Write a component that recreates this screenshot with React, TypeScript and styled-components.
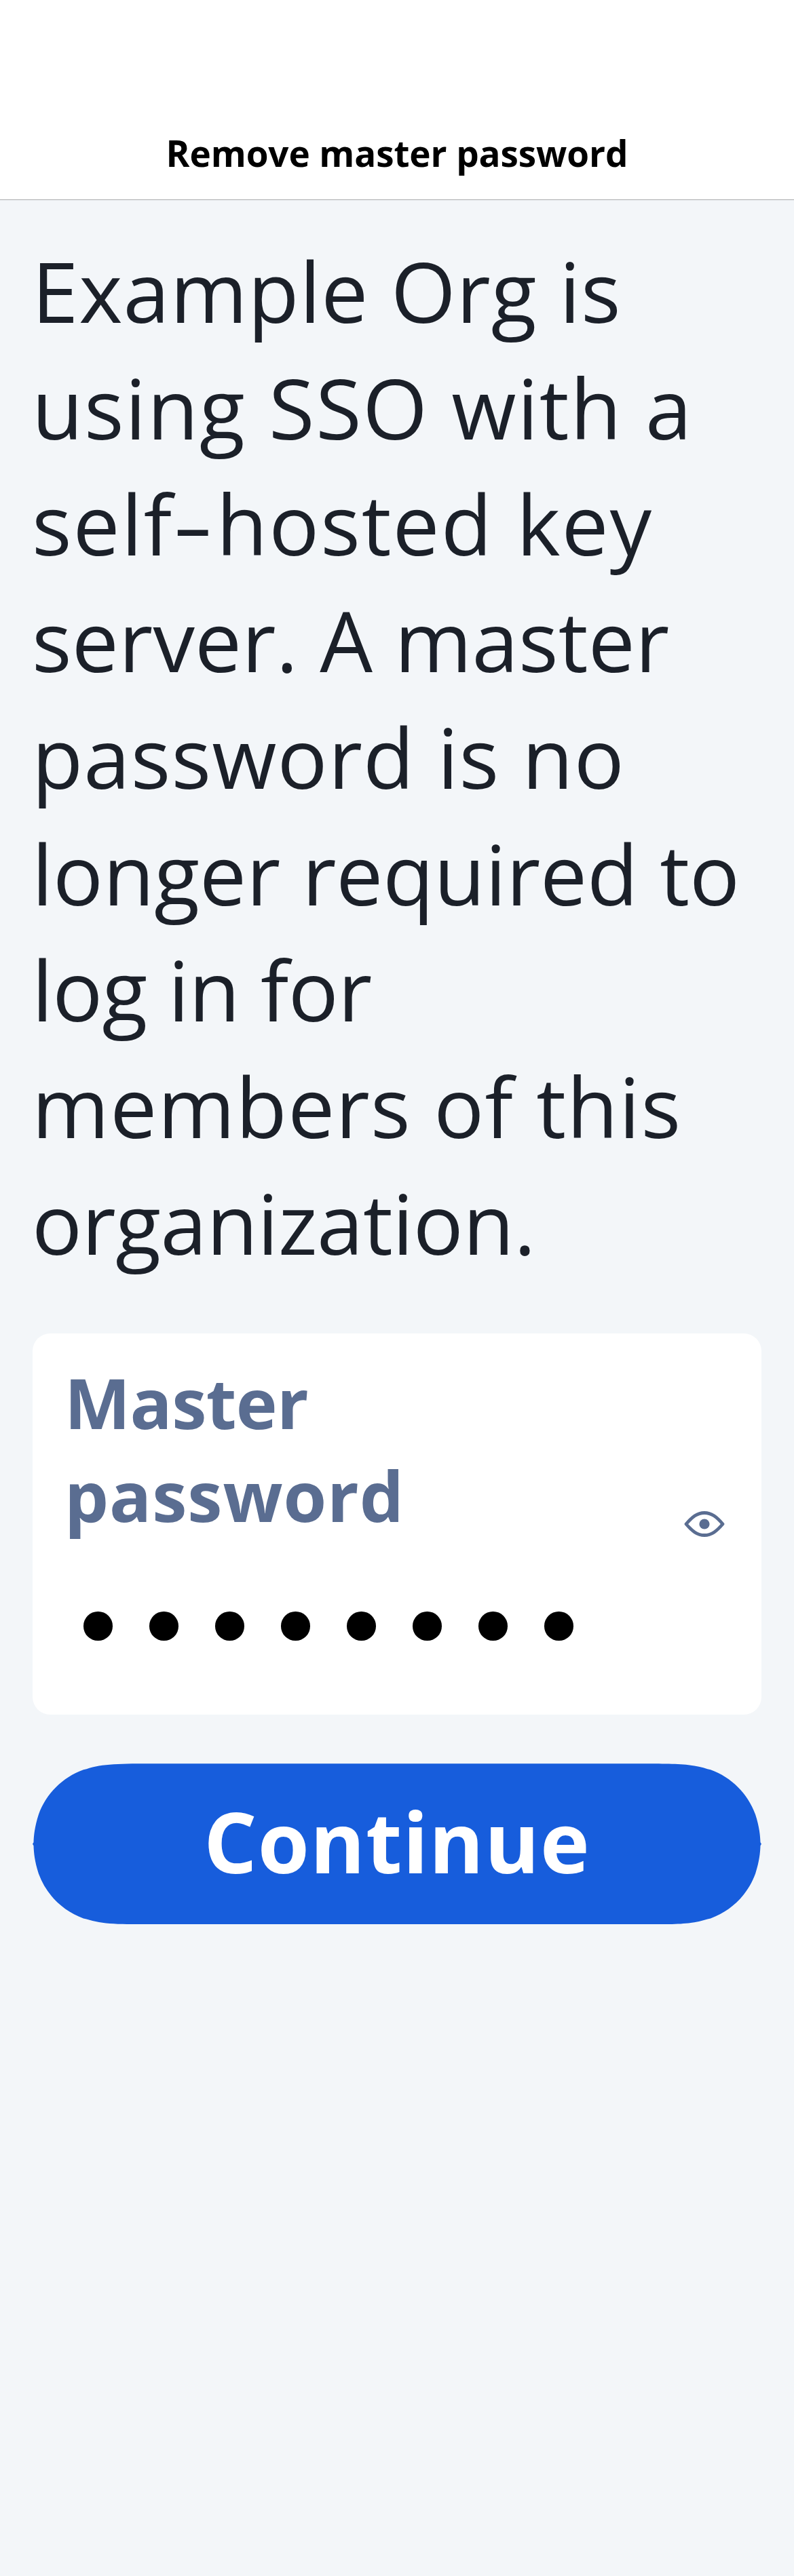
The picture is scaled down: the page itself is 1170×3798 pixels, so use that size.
import React from 'react';
import styled, { createGlobalStyle } from 'styled-components';

const GlobalStyle = createGlobalStyle`
  * { box-sizing: border-box; }
  body {
    margin: 0;
    background: #f3f6f9;
    font-family: "Open Sans", sans-serif;
  }
`;

const Screen = styled.div`
  display: flex;
  flex-direction: column;
  width: 1170px;
  height: 3798px;
  overflow: hidden;
  background: #f3f6f9;
`;

const Header = styled.header`
  display: flex;
  justify-content: center;
  height: 295px;
  padding-top: 196px;
  background: #fff;
  border-bottom: 1px solid #a9abad;
`;

const Title = styled.h1`
  margin: 0;
  font-size: 53px;
  font-weight: 700;
  line-height: 60px;
  letter-spacing: -0.1px;
  white-space: nowrap;
  color: #000;
`;

const Main = styled.main`
  display: flex;
  flex-direction: column;
  padding: 48px 48px 0;
`;

const Message = styled.p`
  margin: 0 -1px;
  font-size: 123px;
  line-height: 171.7px;
  color: #1b2029;
`;

const Line = styled.span<{ $track: number }>`
  display: block;
  white-space: nowrap;
  letter-spacing: ${(p) => p.$track}px;
`;

const Hyphen = styled.span`
  display: inline-block;
  margin: 0 12px 0 10px;
  transform: scaleX(1.5);
`;

const Field = styled.section`
  display: flex;
  align-items: center;
  justify-content: space-between;
  height: 562px;
  margin-top: 78px;
  padding: 0 54px 0 47px;
  border-radius: 26px;
  background: #fff;
`;

const FieldContent = styled.div`
  display: flex;
  flex-direction: column;
  align-self: flex-start;
  padding-top: 33px;
`;

const Label = styled.div`
  font-size: 103px;
  font-weight: 700;
  line-height: 137px;
  color: #5a6d91;
`;

const Dots = styled.div`
  display: flex;
  gap: 54.5px;
  margin: 103px 0 0 28px;
`;

const Dot = styled.span`
  width: 42.5px;
  height: 42.5px;
  border-radius: 50%;
  background: #000;
`;

const EyeIcon = styled.svg`
  display: block;
  width: 60px;
  height: 38px;
`;

const ContinueButton = styled.button`
  width: 1074px;
  height: 237px;
  margin: 72px 0 0;
  padding: 0 0 7px;
  border: 0;
  background: #175ddc;
  clip-path: path("M181 0H893C944.9 0 971 0 994.6 7.8L999.1 8.9C1029.8 20 1054 44.2 1065.1 74.8C1071 93 1072.2 106 1072.5 116L1074 118.5L1072.5 121C1072.2 131 1071 144 1065.1 162.2C1054 192.8 1029.8 217 999.1 228.1L994.6 229.2C971 237 944.9 237 893 237H181C129.1 237 103 237 79.4 229.2L74.9 228.1C44.2 217 20 192.8 8.9 162.2C3 144 1.8 131 1.5 121L0 118.5L1.5 116C1.8 106 3 93 8.9 74.8C20 44.2 44.2 20 74.9 8.9L79.4 7.8C103 0 129.1 0 181 0Z");
  font-family: inherit;
  font-size: 123px;
  font-weight: 700;
  line-height: 230px;
  letter-spacing: 1.1px;
  color: #fff;
`;

const DOT_COUNT = 8;

export default function App() {
  return (
    <Screen>
      <GlobalStyle />
      <Header>
        <Title>Remove master password</Title>
      </Header>
      <Main>
        <Message>
          <Line $track={0.85}>Example Org is</Line>
          <Line $track={1.64}>using SSO with a</Line>
          <Line $track={2}>
            self<Hyphen>-</Hyphen>hosted key
          </Line>
          <Line $track={0.17}>server. A master</Line>
          <Line $track={1.09}>password is no</Line>
          <Line $track={-0.06}>longer required to</Line>
          <Line $track={-0.73}>log in for</Line>
          <Line $track={1.27}>members of this</Line>
          <Line $track={-0.5}>organization.</Line>
        </Message>
        <Field>
          <FieldContent>
            <Label>
              <Line $track={-0.6}>Master</Line>
              <Line $track={0.9}>password</Line>
            </Label>
            <Dots>
              {Array.from({ length: DOT_COUNT }, (_, i) => (
                <Dot key={i} />
              ))}
            </Dots>
          </FieldContent>
          <EyeIcon viewBox="0 0 60 38" fill="none">
            <path
              d="M3 19C12 8.500 19.500 2.500 30 2.500S48 8.500 57 19C48 29.500 40.500 35.500 30 35.500S12 29.500 3 19Z"
              stroke="#5a6d91"
              strokeWidth="4.800"
              strokeLinejoin="round"
            />
            <circle cx="30" cy="19" r="7.600" fill="#5a6d91" />
          </EyeIcon>
        </Field>
        <ContinueButton type="button">Continue</ContinueButton>
      </Main>
    </Screen>
  );
}
